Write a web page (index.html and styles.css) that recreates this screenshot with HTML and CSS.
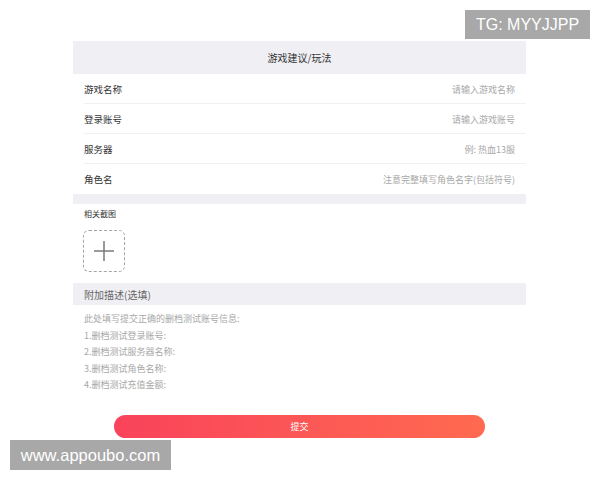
FILE: index.html
```html
<!DOCTYPE html>
<html lang="zh">
<head>
<meta charset="utf-8">
<link rel="stylesheet" href="styles.css">
</head>
<body>
<div class="page">
  <div class="form">
    <div class="title">游戏建议/玩法</div>
    <div class="row"><span class="label">游戏名称</span><span class="ph">请输入游戏名称</span></div>
    <div class="row"><span class="label">登录账号</span><span class="ph">请输入游戏账号</span></div>
    <div class="row"><span class="label">服务器</span><span class="ph">例: 热血13服</span></div>
    <div class="row last"><span class="label">角色名</span><span class="ph">注意完整填写角色名字(包括符号)</span></div>
    <div class="gap"></div>
    <div class="shots">
      <div class="shots-title">相关截图</div>
      <div class="upload">
        <svg width="22" height="22" viewBox="0 0 22 22"><path d="M11 1V21M1 11H21" stroke="#7a7a7a" stroke-width="1.5" fill="none"/></svg>
      </div>
    </div>
    <div class="desc-head">附加描述(选填)</div>
    <div class="desc">
      <div>此处填写提交正确的删档测试账号信息:</div>
      <div>1.删档测试登录账号:</div>
      <div>2.删档测试服务器名称:</div>
      <div>3.删档测试角色名称:</div>
      <div>4.删档测试充值金额:</div>
    </div>
    <div class="btn-wrap"><div class="btn">提交</div></div>
  </div>
</div>
<div class="wm wm-tg">TG: MYYJJPP</div>
<div class="wm wm-site">www.appoubo.com</div>
</body>
</html>
```
FILE: styles.css
```css
html, body {
  margin: 0;
  padding: 0;
  background: #fff;
}
body {
  width: 600px;
  height: 480px;
  position: relative;
  overflow: hidden;
  font-family: "Noto Sans CJK SC", "Liberation Sans", sans-serif;
}
.page {
  padding-top: 41px;
  display: flex;
  justify-content: center;
}
.form {
  width: 453px;
  margin-left: -1px;
}
.title {
  height: 33px;
  background: #efeff4;
  display: flex;
  align-items: center;
  justify-content: center;
  font-size: 10px;
  color: #333;
}
.row {
  height: 30px;
  display: flex;
  align-items: center;
  justify-content: space-between;
  padding: 0 11px;
  position: relative;
}
.row::after {
  content: "";
  position: absolute;
  left: 11px;
  right: 0;
  bottom: 0;
  height: 1px;
  background: #f0f0f0;
}
.row.last::after { display: none; }
.label {
  font-size: 9.5px;
  color: #333;
}
.ph {
  font-size: 9px;
  color: #a8a8a8;
}
.gap {
  height: 10px;
  background: #efeff4;
}
.shots {
  padding: 4px 10px 11px;
}
.shots-title {
  font-size: 8px;
  color: #333;
  line-height: 11px;
  padding-left: 1px;
}
.upload {
  margin-top: 11px;
  width: 40px;
  height: 40px;
  border: 1px dashed #a5a5a5;
  border-radius: 6px;
  display: flex;
  align-items: center;
  justify-content: center;
}
.desc-head {
  height: 22px;
  background: #efeff4;
  display: flex;
  align-items: center;
  padding-left: 11px;
  font-size: 10px;
  color: #666;
}
.desc {
  padding: 6px 11px 0;
  font-size: 9px;
  line-height: 16.5px;
  color: #a8a8a8;
}
.btn-wrap {
  display: flex;
  justify-content: center;
  margin-top: 21px;
}
.btn {
  width: 371px;
  height: 23px;
  border-radius: 12px;
  background: linear-gradient(90deg, #f9435b 0%, #ff6a50 100%);
  color: #fff;
  font-size: 9px;
  display: flex;
  align-items: center;
  justify-content: center;
}
.wm {
  position: absolute;
  background: #a8a8a8;
  color: #fff;
  font-family: "Liberation Sans", Arial, sans-serif;
  font-size: 16px;
  display: flex;
  align-items: center;
  justify-content: center;
}
.wm-tg {
  left: 465px;
  top: 10px;
  width: 125px;
  height: 29px;
}
.wm-site {
  left: 10px;
  top: 440px;
  width: 161px;
  height: 30px;
  font-size: 16.5px;
}
```
